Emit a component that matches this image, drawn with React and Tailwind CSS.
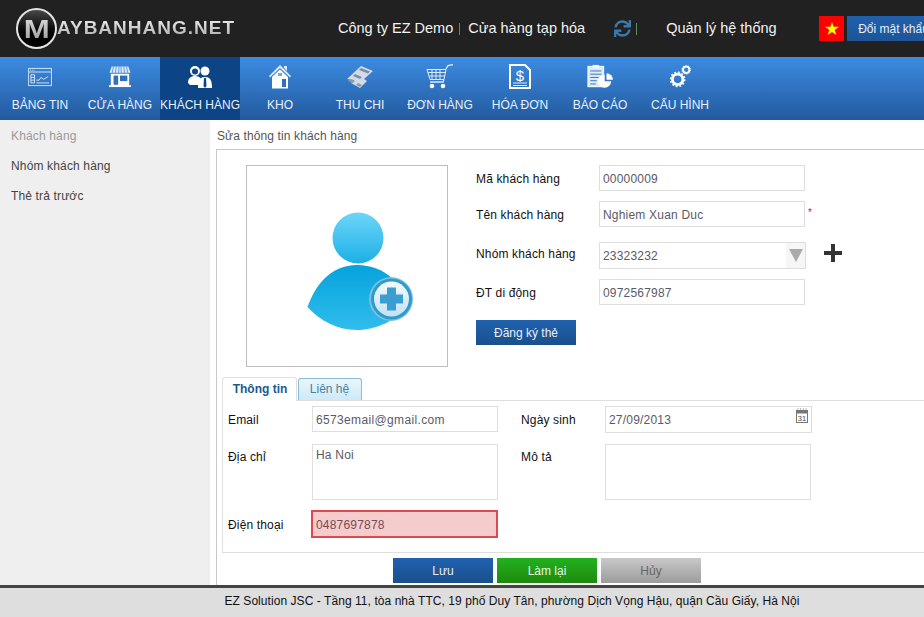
import { FaSync } from "react-icons/fa";

const font = { fontFamily: '"Liberation Sans", Arial, sans-serif' };

// Nav icons are small hand drawn white glyphs
const DashIcon = () => (
  <svg width="26" height="20" viewBox="0 0 28 22" fill="none" stroke="#dceafa" strokeWidth="1">
    <rect x="1.500" y="1.500" width="25" height="19" />
    <path d="M2 5.500h24" />
    <path d="M3 3.500h1M5 3.500h1M7 3.500h1" />
    <path d="M4 8.500h4v9h-4zM4 11.500h4M4 14.500h4" />
    <path d="M10 14.500h3l2-3 3 2 5-3" />
    <path d="M10 17.500h14" />
  </svg>
);

const ShopIcon = () => (
  <svg width="22" height="23" viewBox="0 0 24 24">
    <path d="M3 1h18l2.500 7h-23z" fill="#dceafa" />
    <path d="M5 1l-1.500 7M8 1l-1 7M11 1l-.5 7M13 1l.5 7M16 1l1 7M19 1l1.500 7" stroke="#3f7fc8" strokeWidth="0.800" />
    <path d="M2 9h20v14h-20z" fill="#fff" />
    <rect x="5" y="11" width="5" height="10" fill="#2f70b8" />
    <rect x="12" y="11" width="8" height="6" fill="#2f70b8" />
    <rect x="0" y="21.500" width="24" height="2" fill="#fff" />
  </svg>
);

const PeopleIcon = () => (
  <svg width="26" height="24" viewBox="0 0 26 24" fill="#fff">
    <circle cx="8" cy="6" r="5" />
    <circle cx="8" cy="6.500" r="3" fill="#0d4485" />
    <path d="M1 18c0-5 3-7 7-7 3 0 5 1 6 3v6H3z" />
    <circle cx="18" cy="6" r="4.500" />
    <path d="M11 23c0-8 2-11 7-11s7 3 7 11z" />
    <path d="M17 13h2l.5 8-1.500 2-1.500-2z" fill="#0d4485" />
  </svg>
);

const HomeIcon = () => (
  <svg width="22" height="24" viewBox="0 0 22 24">
    <path d="M11 0L22 11l-1 1.500-10-9.500-10 9.500L0 11zM15 1h3v5l-3-3z" fill="#dceafa" />
    <path d="M11 4.500l8 7.500v11.500H3V12z" fill="#fff" />
    <rect x="13" y="14" width="4" height="8" fill="#2f70b8" />
    <rect x="9" y="8" width="4" height="3" fill="#7aa9dc" />
  </svg>
);

const CashIcon = () => (
  <svg width="28" height="24" viewBox="0 0 28 24">
    <path d="M1 14L15 1l12 5-9 8 3 2-7 7-9-5 3-3z" fill="#d3dbe6" />
    <path d="M15 3l9 3.500-2 2-9-3.500zM9 9l7 3-2 2-7-3z" fill="#7d8fa6" />
    <path d="M4 14l5 2-2 2-5-2zM12 18l4 2-2 2-4-2z" fill="#8a9bb0" />
  </svg>
);

const CartIcon = () => (
  <svg width="28" height="26" viewBox="0 0 28 26" fill="none" stroke="#dceafa" strokeWidth="1">
    <path d="M1 5.500h19L18 15.500H4z" />
    <path d="M2 8.500h18M3 12h16M6 5.500v10M10 5.500v10M14 5.500v10" />
    <path d="M20 5L22 1.500l5-1M18 15.500l-1 2.500H4" strokeWidth="1.300" />
    <circle cx="6" cy="22" r="2.300" fill="#fff" stroke="none" />
    <circle cx="17" cy="22" r="2.300" fill="#fff" stroke="none" />
  </svg>
);

const InvoiceIcon = () => (
  <svg width="22" height="25" viewBox="0 0 22 25">
    <path d="M1 1h15l5 5v18H1z" fill="none" stroke="#fff" strokeWidth="2" />
    <path d="M4 19h14M4 21.500h14" stroke="#dceafa" strokeWidth="1" />
    <text x="11" y="16.500" textAnchor="middle" fontSize="15" fill="#fff" fontFamily="Liberation Sans">$</text>
  </svg>
);

const ReportIcon = () => (
  <svg width="26" height="26" viewBox="0 0 28 27">
    <rect x="1" y="2" width="17" height="22" fill="#dceafa" stroke="#fff" />
    <rect x="6" y="0.500" width="7" height="3" fill="#fff" />
    <path d="M3.500 7h12M3.500 10.500h12M3.500 14h9M3.500 17.500h7M3.500 21h6" stroke="#2f70b8" strokeWidth="1" />
    <path d="M19 15.500v-7a7 7 0 0 1 7 7z" fill="#fff" transform="translate(2 1)" />
    <path d="M19 11a7 7 0 1 0 7 7h-7z" fill="#fff" />
  </svg>
);

const GearIcon = () => (
  <svg width="21" height="23" viewBox="0 0 22 24" fill="none" stroke="#fff">
    <circle cx="8" cy="15" r="5.500" strokeWidth="3" />
    <circle cx="8" cy="15" r="7.500" strokeWidth="1.500" strokeDasharray="2 1.930" />
    <circle cx="17" cy="5" r="3.300" strokeWidth="2" />
    <circle cx="17" cy="5" r="4.500" strokeWidth="1" strokeDasharray="1.500 1.300" />
  </svg>
);

const navItems = [
  { label: "BẢNG TIN", icon: DashIcon },
  { label: "CỬA HÀNG", icon: ShopIcon },
  { label: "KHÁCH HÀNG", icon: PeopleIcon, active: true },
  { label: "KHO", icon: HomeIcon },
  { label: "THU CHI", icon: CashIcon },
  { label: "ĐƠN HÀNG", icon: CartIcon },
  { label: "HÓA ĐƠN", icon: InvoiceIcon },
  { label: "BÁO CÁO", icon: ReportIcon },
  { label: "CẤU HÌNH", icon: GearIcon },
];

// Big avatar with the round plus badge
const AvatarIcon = () => (
  <svg width="108" height="118" viewBox="0 0 108 118">
    <defs>
      <linearGradient id="head" x1="0" y1="0" x2="0" y2="1">
        <stop offset="0" stopColor="#6dd5f9" />
        <stop offset="1" stopColor="#1cb0e6" />
      </linearGradient>
      <linearGradient id="body" x1="0" y1="0" x2="0" y2="1">
        <stop offset="0" stopColor="#05a3dc" />
        <stop offset="1" stopColor="#30bdec" />
      </linearGradient>
      <linearGradient id="badge" x1="0" y1="0" x2="0" y2="1">
        <stop offset="0" stopColor="#f4fafd" />
        <stop offset="1" stopColor="#c2e2f5" />
      </linearGradient>
    </defs>
    <circle cx="51" cy="26" r="25.500" fill="url(#head)" />
    <path d="M0.500 95C8 73 24 53 50 53c28 0 47 20 52 42-13 13-33 23-52 23-19 0-37-9-49.500-23z" fill="url(#body)" />
    <circle cx="84" cy="87" r="22" fill="#7cc0e0" />
    <circle cx="84.500" cy="87" r="20.500" fill="#2f9bcd" />
    <circle cx="84.500" cy="87" r="17.500" fill="url(#badge)" />
    <path d="M80 75.500h9v7h7v9h-7v7h-9v-7h-7v-9h7z" fill="#3a9ed0" />
  </svg>
);

const CalendarIcon = () => (
  <svg width="12" height="15" viewBox="0 0 12 15" fill="none">
    <rect x="0.500" y="2.500" width="11" height="12" stroke="#777" fill="#fff" />
    <rect x="0.500" y="2.500" width="11" height="3" fill="#777" />
    <path d="M2 0.500v3M4.700 0.500v3M7.300 0.500v3M10 0.500v3" stroke="#777" strokeDasharray="1 1" />
    <text x="6" y="12.500" textAnchor="middle" fontSize="7.500" fill="#444" fontFamily="Liberation Sans">31</text>
  </svg>
);

const StarIcon = () => (
  <svg width="14" height="13" viewBox="0 0 14 13">
    <path d="M7 0l1.700 4.800H14L9.700 8l1.600 5L7 9.900 2.700 13l1.600-5L0 4.800h5.300z" fill="#ffff00" />
  </svg>
);

const Field = ({ value, className = "" }) => (
  <div className={`flex h-[26px] items-center border border-[#dedede] pt-[1px] pl-[3px] text-[12px] text-[#5a5a66] ${className}`}>{value}</div>
);

const Label = ({ children, className = "" }) => <div className={`text-[12px] tracking-[0.15px] text-[#111] ${className}`}>{children}</div>;

const ActionButton = ({ children, className }) => (
  <div className={`flex h-[25px] w-[100px] items-center justify-center text-[12px] ${className}`}>{children}</div>
);

export default function App() {
  return (
    <div className="flex h-[617px] w-[924px] flex-col overflow-hidden bg-white" style={font}>
      <header className="flex h-[57px] shrink-0 items-center bg-[#212121] whitespace-nowrap">
        <div className="ml-[16px] flex w-[322px] shrink-0 items-center">
          <div className="flex h-[41px] w-[41px] items-center justify-center overflow-hidden rounded-full border-2 border-[#e4e4e4] bg-gradient-to-b from-[#4a4a4a] via-[#0c0c0c] to-black">
            <span className="inline-block scale-x-[1.2] bg-gradient-to-b from-[#e2e2e2] to-[#9a9a9a] bg-clip-text text-[26px] leading-none font-bold text-transparent">M</span>
          </div>
          <span className="bg-gradient-to-b from-white to-[#9a9a9a] bg-clip-text text-[19px] font-bold tracking-[1px] text-transparent">AYBANHANG.NET</span>
        </div>
        <div className="flex shrink-0 items-center text-[14.5px] text-[#f2f2f2]">
          <span>Công ty EZ Demo</span>
          <span className="mr-[8px] ml-[6px] h-[12px] w-px bg-[#5f8a66]" />
          <span>Cửa hàng tạp hóa</span>
        </div>
        <FaSync className="ml-[29px] shrink-0 text-[#3b79ad]" size={17} />
        <span className="ml-[5px] h-[12px] w-px shrink-0 bg-[#5f8a66]" />
        <span className="ml-[29px] w-[110px] shrink-0 text-[14.5px] text-[#f2f2f2]">Quản lý hệ thống</span>
        <div className="ml-[43px] flex h-[25px] w-[25px] shrink-0 items-center justify-center bg-[#ff0000]"><StarIcon /></div>
        <div className="ml-[3px] flex h-[25px] w-[120px] shrink-0 items-center bg-gradient-to-b from-[#2160ac] to-[#1d5596] pl-[11px] text-[12px] text-[#e8eef6]">Đổi mật khẩu</div>
      </header>

      <nav className="flex h-[63px] shrink-0 bg-gradient-to-b from-[#3c8ce2] to-[#235a9e]">
        {navItems.map(({ label, icon: Icon, active }) => (
          <div key={label} className={`flex w-[80px] flex-col items-center pt-[6px] text-[12px] whitespace-nowrap text-[#e8f0fa] ${active ? "bg-[#0d4485]" : ""}`}>
            <div className="flex h-[27px] items-center"><Icon /></div>
            <div className="mt-[6px]">{label}</div>
          </div>
        ))}
      </nav>

      <div className="flex min-h-0 flex-1">
        <aside className="w-[210px] shrink-0 bg-[#efefef] pl-[11px] text-[12px] tracking-[0.15px] text-[#444]">
          <div className="flex h-[30px] items-center pt-[2px] text-[#999]">Khách hàng</div>
          <div className="flex h-[30px] items-center pt-[2px]">Nhóm khách hàng</div>
          <div className="flex h-[30px] items-center pt-[2px]">Thẻ trả trước</div>
        </aside>

        <main className="ml-[6px] min-w-0 flex-1">
          <div className="flex h-[29px] items-center pt-[2px] pl-[1px] text-[12px] tracking-[0.12px] text-[#555]">Sửa thông tin khách hàng</div>
          <div className="h-[436px] border-t border-l border-[#c8c8c8] pt-[15px]">
            <div className="flex">
              <div className="ml-[29px] flex h-[202px] w-[202px] items-center justify-center border border-[#bdbdbd]">
                <div className="mt-[9px] ml-[27px]"><AvatarIcon /></div>
              </div>

              <div className="ml-[28px]">
                <div className="flex items-center">
                  <Label className="w-[123px] pt-[2px]">Mã khách hàng</Label>
                  <Field value="00000009" className="w-[206px] tracking-[0.2px]" />
                </div>
                <div className="mt-[10px] flex items-center">
                  <Label className="w-[123px] pt-[2px]">Tên khách hàng</Label>
                  <Field value="Nghiem Xuan Duc" className="w-[206px] tracking-[0.2px]" />
                  <span className="mb-[4px] ml-[3px] text-[10px] text-[#e0103a]">*</span>
                </div>
                <div className="mt-[15px] flex items-center">
                  <Label className="mb-[3px] w-[123px]">Nhóm khách hàng</Label>
                  <div className="relative flex h-[27px] w-[207px] items-center border border-[#dedede] pl-[3px] text-[12px] tracking-[0.2px] text-[#5a5a66]">
                    23323232
                    <div className="absolute top-0 right-0 flex h-[25px] w-[19px] items-center justify-center bg-[#f6f6f6]">
                      <div className="h-0 w-0 border-x-[7px] border-t-[13px] border-x-transparent border-t-[#aaa]" />
                    </div>
                  </div>
                  <div className="relative mb-[6px] ml-[18px] h-[18px] w-[18px]">
                    <div className="absolute top-[7px] left-0 h-[4px] w-[18px] bg-[#333]" />
                    <div className="absolute top-0 left-[7px] h-[18px] w-[4px] bg-[#333]" />
                  </div>
                </div>
                <div className="mt-[10px] flex items-center">
                  <Label className="w-[123px] pt-[2px]">ĐT di động</Label>
                  <Field value="0972567987" className="w-[206px] tracking-[0.2px]" />
                </div>
                <ActionButton className="mt-[15px] bg-gradient-to-b from-[#1f62b0] to-[#1b4f8c] text-[#e8eef6]">Đăng ký thẻ</ActionButton>
              </div>
            </div>

            <div className="mt-[10px] ml-[5px]">
              <div className="flex h-[23px] items-end">
                <div className="-mb-px flex h-[24px] w-[75px] items-center justify-center rounded-t-[3px] border border-b-0 border-[#e2e2e2] bg-white pb-[2px] pl-[1px] text-[12px] font-bold text-[#1b5a8f]">Thông tin</div>
                <div className="ml-px flex h-[22px] w-[64px] items-center justify-center rounded-t-[3px] border border-b-0 border-[#8cbcd8] bg-gradient-to-b from-[#e9f6fd] to-[#cde9f8] pr-[1px] pb-[1px] text-[12px] text-[#4a7fa5]">Liên hệ</div>
              </div>
              <div className="h-[153px] border-t border-b border-l border-[#dedede] pl-[5px]">
                <div className="flex pt-[5px]">
                  <div className="w-[277px]">
                    <div className="flex items-center">
                      <Label className="w-[84px] pt-[1px]">Email</Label>
                      <Field value="6573email@gmail.com" className="w-[186px] tracking-[0.35px]" />
                    </div>
                    <div className="mt-[12px] flex">
                      <Label className="w-[84px] pt-[4px]">Địa chỉ</Label>
                      <div className="h-[56px] w-[186px] border border-[#dedede] pt-[1px] pl-[3px] text-[12px] tracking-[0.2px] text-[#5a5a66]">Ha Noi</div>
                    </div>
                    <div className="mt-[10px] flex items-center">
                      <Label className="w-[83px] pt-[1px]">Điện thoại</Label>
                      <div className="flex h-[28px] w-[187px] items-center border-2 border-[#e2474f] bg-[#f5cccc] pt-[1px] pl-[3px] text-[12px] tracking-[0.2px] text-[#7a4a50]">0487697878</div>
                    </div>
                  </div>
                  <div className="ml-[16px]">
                    <div className="flex items-center">
                      <Label className="w-[84px]">Ngày sinh</Label>
                      <div className="relative flex h-[27px] w-[207px] items-center border border-[#dedede] pl-[3px] text-[12px] tracking-[0.2px] text-[#5a5a66]">
                        27/09/2013
                        <div className="absolute top-[1px] right-[3px]"><CalendarIcon /></div>
                      </div>
                    </div>
                    <div className="mt-[11px] flex">
                      <Label className="w-[84px] pt-[4px]">Mô tả</Label>
                      <div className="h-[56px] w-[206px] border border-[#dedede]" />
                    </div>
                  </div>
                </div>
              </div>
              <div className="mt-[5px] ml-[171px] flex gap-[4px]">
                <ActionButton className="bg-gradient-to-b from-[#1f62b0] to-[#1b4f8c] text-[#e8eef6]">Lưu</ActionButton>
                <ActionButton className="bg-gradient-to-b from-[#23b11f] to-[#1f8a0c] text-[#e8f5e8]">Làm lại</ActionButton>
                <ActionButton className="bg-gradient-to-b from-[#c9c9c9] to-[#9c9c9c] text-[#666]">Hủy</ActionButton>
              </div>
            </div>
          </div>
        </main>
      </div>

      <footer className="flex h-[32px] shrink-0 items-start justify-center border-t-[3px] border-[#444] bg-[#dedede] pt-[4px] pl-[100px] text-[12px] tracking-[0.06px] text-[#111]">
        EZ Solution JSC - Tầng 11, tòa nhà TTC, 19 phố Duy Tân, phường Dịch Vọng Hậu, quận Cầu Giấy, Hà Nội
      </footer>
    </div>
  );
}
